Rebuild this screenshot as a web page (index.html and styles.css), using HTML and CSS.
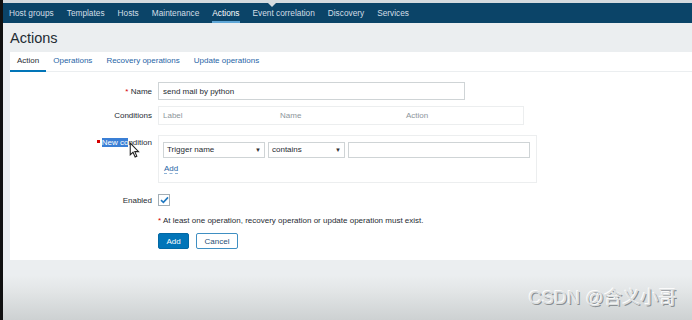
FILE: index.html
```html
<!DOCTYPE html>
<html lang="en">
<head>
  <meta charset="UTF-8" />
  <title>Actions</title>
  <link rel="stylesheet" href="styles.css">
</head>
<body>
  <div class="frame">
    <div class="topline"></div>

    <!-- Top menu -->
    <nav class="nav">
      <a>Host groups</a>
      <a>Templates</a>
      <a>Hosts</a>
      <a>Maintenance</a>
      <a class="active">Actions</a>
      <a>Event correlation</a>
      <a>Discovery</a>
      <a>Services</a>
    </nav>

    <h1>Actions</h1>

    <div class="card">
      <div class="tabs">
        <a class="active">Action</a>
        <a>Operations</a>
        <a>Recovery operations</a>
        <a>Update operations</a>
      </div>

      <div class="form">
        <div class="row row-name">
          <label><span class="req">*</span> Name</label>
          <input class="text name-input" type="text" value="send mail by python">
        </div>

        <div class="row row-cond">
          <label>Conditions</label>
          <div class="cond-table">
            <span>Label</span>
            <span>Name</span>
            <span>Action</span>
          </div>
        </div>

        <div class="row row-new">
          <label class="top">
            <span class="bullet"></span><span class="sel">New co</span><span class="hover">ndition<svg class="cursor" width="11" height="16" viewBox="0 0 10 15">
              <path d="M1 1 L1 12 L3.6 9.6 L5.6 14 L7.2 13.3 L5.3 9 L8.8 9 Z" fill="#fff" stroke="#222" stroke-width="1"/>
            </svg></span>
          </label>
          <div class="new-box">
            <div class="controls">
              <div class="select sel-field">Trigger name<span class="arrow">▼</span></div>
              <div class="select sel-op">contains<span class="arrow">▼</span></div>
              <input class="text value-input" type="text">
            </div>
            <a class="link">Add</a>
          </div>
        </div>

        <div class="row row-enabled">
          <label>Enabled</label>
          <span class="checkbox">
            <svg width="9" height="8" viewBox="0 0 9 8"><path d="M1 4.2 L3.4 6.4 L8 1.4" fill="none" stroke="#1f78c1" stroke-width="1.6"/></svg>
          </span>
        </div>

        <div class="row row-note">
          <label></label>
          <div class="note"><span class="req">*</span> At least one operation, recovery operation or update operation must exist.</div>
        </div>

        <div class="row row-buttons">
          <label></label>
          <div class="buttons">
            <button class="btn primary">Add</button>
            <button class="btn secondary">Cancel</button>
          </div>
        </div>
      </div>
    </div>

    <div class="footer">
      <span class="watermark">CSDN @含义小哥</span>
    </div>
  </div>
</body>
</html>
```

FILE: styles.css
```css
body {
  margin: 0;
  font-family: "Liberation Sans", Arial, "Noto Sans CJK SC", sans-serif;
  color: #1f2c33;
  background: #111;
  height: 320px;
  overflow: hidden;
}

.frame {
  margin-left: 3px;
  height: 320px;
  background: linear-gradient(to bottom, #ebeef0 0, #ebeef0 275px, #e3e6e7 290px, #cdd1d2 320px);
}

.topline {
  height: 3px;
  background: #d5dbdf;
  position: relative;
}

.topline::after {
  content: "";
  position: absolute;
  left: 265px;
  top: 3px;
  border-left: 4px solid transparent;
  border-right: 4px solid transparent;
  border-top: 4px solid #d5dbdf;
}

.nav {
  display: flex;
  gap: 13px;
  height: 20px;
  padding-left: 6px;
  background: #0b4468;
  font-size: 8.3px;
  line-height: 20px;
}

.nav a {
  color: #d3dee6;
  position: relative;
}

.nav a.active {
  color: #fff;
}

.nav a.active::after {
  content: "";
  position: absolute;
  left: 0;
  right: 0;
  bottom: 0;
  height: 2px;
  background: #5fa6d6;
}

h1 {
  margin: 0;
  padding: 7px 0 0 7px;
  height: 22px;
  font-size: 14.5px;
  font-weight: normal;
  line-height: 17px;
  color: #1f2c33;
}

.card {
  margin-left: 7px;
  background: #fff;
  height: 208px;
}

.tabs {
  display: flex;
  height: 19px;
  border-bottom: 1px solid #ebeef0;
  font-size: 8px;
  line-height: 18px;
}

.tabs a {
  padding: 0 7px;
  color: #1f65a6;
}

.tabs a.active {
  color: #1f2c33;
  border-bottom: 2px solid #0275b8;
  height: 18px;
}

.form {
  padding-top: 10px;
  font-size: 8px;
}

.row {
  display: grid;
  grid-template-columns: 142px auto;
  column-gap: 6px;
  align-items: center;
}

.row label {
  text-align: right;
  color: #1f2c33;
}

.row label.top {
  align-self: start;
  padding-top: 3px;
}

.req {
  color: #d40000;
}

.text {
  box-sizing: border-box;
  height: 18px;
  border: 1px solid #cfd4d6;
  padding: 0 4px;
  font: inherit;
  color: #1f2c33;
  background: #fff;
}

.name-input {
  width: 307px;
}

.row-name { margin-bottom: 6px; }
.row-cond { margin-bottom: 10px; }
.row-new { margin-bottom: 11px; }
.row-enabled { margin-bottom: 9px; }
.row-note { margin-bottom: 6px; }

.cond-table {
  width: 366px;
  box-sizing: border-box;
  height: 19px;
  border: 1px solid #eceeef;
  display: grid;
  grid-template-columns: 117px 126px auto;
  padding-left: 4px;
  line-height: 17px;
  color: #8c959b;
}

.bullet {
  display: inline-block;
  width: 3px;
  height: 3px;
  background: #d40000;
  margin-right: 2px;
  vertical-align: 2px;
}

.sel {
  background: #3a7fd5;
  color: #fff;
}

.hover {
  position: relative;
}

.cursor {
  position: absolute;
  left: 1px;
  top: 4px;
}

.new-box {
  width: 379px;
  height: 48px;
  box-sizing: border-box;
  border: 1px solid #eceeef;
  padding: 6px 0 0 4px;
}

.controls {
  display: flex;
  gap: 3px;
}

.select {
  box-sizing: border-box;
  height: 16px;
  border: 1px solid #cfd4d6;
  padding: 0 3px;
  line-height: 14px;
  display: flex;
  justify-content: space-between;
  color: #1f2c33;
}

.arrow {
  font-size: 6px;
  color: #333;
}

.sel-field { width: 102px; }
.sel-op { width: 77px; }

.value-input {
  width: 182px;
  height: 16px;
}

.link {
  display: inline-block;
  margin: 6px 0 0 1px;
  color: #1f65a6;
  border-bottom: 1px dashed #8fb3d6;
  line-height: 9px;
}

.checkbox {
  box-sizing: border-box;
  width: 12px;
  height: 12px;
  border: 1px solid #a3aeb5;
  display: flex;
  align-items: center;
  justify-content: center;
}

.note {
  color: #1f2c33;
  line-height: 12px;
}

.buttons {
  display: flex;
  gap: 7px;
}

.btn {
  box-sizing: border-box;
  height: 16px;
  border-radius: 2px;
  font: inherit;
  padding: 0;
  cursor: pointer;
}

.btn.primary {
  width: 31px;
  background: #0275b8;
  border: 1px solid #0268a4;
  color: #fff;
}

.btn.secondary {
  width: 42px;
  background: #fff;
  border: 1px solid #3f8fc2;
  color: #1f4f75;
}

.footer {
  text-align: right;
  padding: 23px 15px 0 0;
}

.watermark {
  font-size: 18px;
  color: #dcdfe0;
  text-shadow: -1px -1px 0 #fbfbfb, 1px 1px 0 #8a8f92;
  letter-spacing: 0.2px;
}
```
